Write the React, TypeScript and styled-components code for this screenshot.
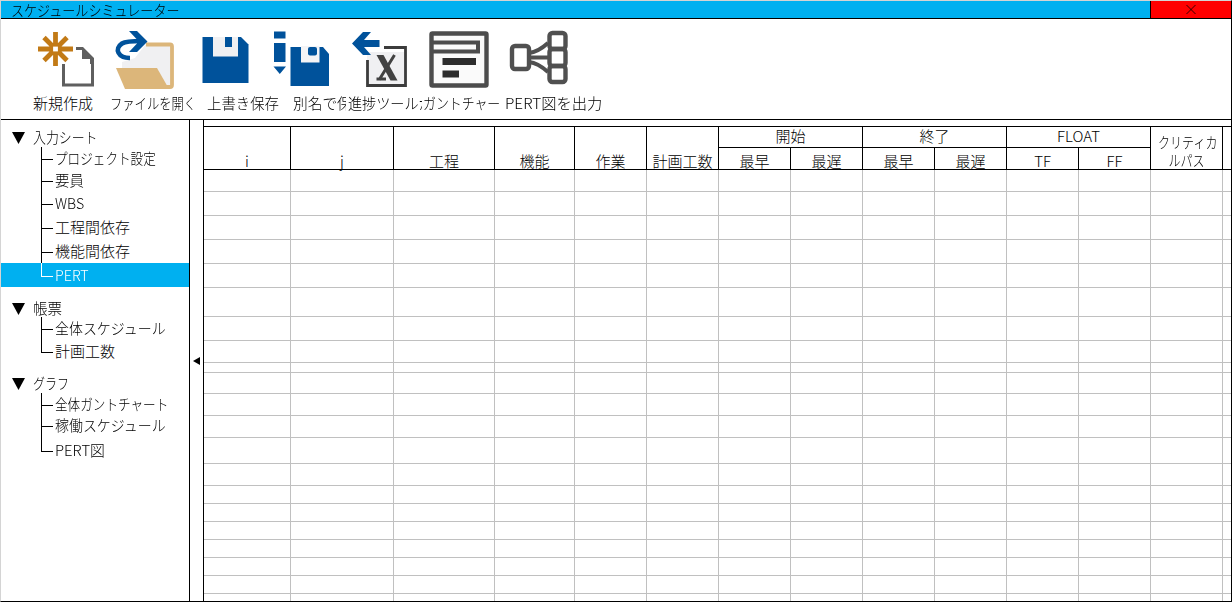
import React from "react";
import styled, { createGlobalStyle } from "styled-components";

const Global = createGlobalStyle`
  * { box-sizing: border-box; }
  body { margin: 0; background: #fff; color: #000; overflow: hidden;
    font: 300 15px/18px "Noto Sans CJK JP", sans-serif; }
`;

const Window = styled.div`
  width: 1232px; height: 602px; display: flex; flex-direction: column;
  border: solid; border-width: 1px; border-color: #d4d4d4 #000 #000 #d4d4d4;
`;
const TitleBar = styled.header`
  flex: 0 0 18px; height: 18px; display: flex; background: #00b0f0; border-bottom: 1px solid #000;
  padding-left: 10px; line-height: 17px;
`;
const CloseButton = styled.div`
  margin-left: auto; width: 81px; background: #f00; border-left: 1px solid #000;
  display: flex; justify-content: center; align-items: center;
`;
/* Text squeezed horizontally to a fixed run width, like a proportional gothic. */
const Fit = styled.span<{ $s?: number }>`
  display: inline-block; white-space: nowrap; transform-origin: 0 50%;
  transform: scaleX(${(p) => p.$s ?? 1});
`;
const Toolbar = styled.nav`
  flex: 0 0 101px; display: flex; border-bottom: 1px solid #000; padding-left: 32px;
`;
const Tool = styled.div<{ $w: number; $icon: number; $soft?: boolean }>`
  flex: 0 0 ${(p) => p.$w}px; min-width: 0; padding-top: 9px;
  svg { display: block; width: 68px; height: 64px; margin-left: ${(p) => p.$icon}px;
    filter: ${(p) => (p.$soft ? "blur(0.7px)" : "none")}; }
`;
const ToolLabel = styled.div<{ $clip: number }>`
  height: 22px; margin: 2px ${(p) => p.$clip}px 0 0; overflow: hidden; white-space: nowrap;
`;

const Body = styled.div`flex: 1; display: flex; min-height: 0;`;
const Sidebar = styled.aside`
  width: 189px; border-right: 1px solid #000; padding-top: 9px;
`;
const Group = styled.section<{ $gap: number }>`margin-bottom: ${(p) => p.$gap}px;`;
const GroupHead = styled.div<{ $h: number }>`
  display: flex; height: ${(p) => p.$h}px; padding-left: 11px; gap: 8px; line-height: 15px;
  svg { margin-top: 3px; }
`;
const Leaf = styled.div<{ $h: number; $active?: boolean }>`
  height: ${(p) => p.$h}px; display: flex; padding-left: 40px;
  background: ${(p) => (p.$active ? "#00b0f0" : "transparent")};
  color: ${(p) => (p.$active ? "#fff" : "#000")};
`;
const Branch = styled.span<{ $mid: number; $last?: boolean }>`
  flex: 0 0 12px; margin-right: 2px; display: flex; flex-direction: column;
  &::before { content: ""; height: ${(p) => p.$mid}px; border: solid currentColor; border-width: 0 0 1px 1px; }
  &::after { content: ""; flex: 1; border-left: ${(p) => (p.$last ? 0 : 1)}px solid currentColor; }
`;
const LeafText = styled.span<{ $mid: number }>`margin-top: ${(p) => p.$mid - 10}px;`;
const Splitter = styled.div`
  width: 14px; border-right: 1px solid #000; padding: 237px 0 0 3px;
  svg { display: block; }
`;
const Sheet = styled.main`flex: 1; min-width: 0; padding-top: 6px; overflow: hidden;`;
const Table = styled.table`
  table-layout: fixed; border-collapse: separate; border-spacing: 0; width: 1027px;
  border-top: 1px solid #000;
`;
const Th = styled.th<{ $end?: boolean; $group?: boolean }>`
  padding: 0 0 ${(p) => (p.$group ? 3 : 0)}px; font-weight: 300; text-align: center; vertical-align: bottom;
  border: solid #000; border-width: 0 ${(p) => (p.$end ? 0 : 1)}px 1px 0;
  line-height: 17px; white-space: nowrap;
`;
const Crit = styled.div`line-height: 18px; transform: scaleX(0.8);`;
const Td = styled.td<{ $end?: boolean }>`
  padding: 0; border: solid #c0c0c0; border-width: 0 ${(p) => (p.$end ? 0 : 1)}px 1px 0;
`;
const Row = styled.tr<{ $h: number }>`height: ${(p) => p.$h}px;`;

const BLUE = "#00529b";

const NewIcon = () => (
  <svg viewBox="0 0 68 64">
    <path d="M34.500 36V57H63.500V31" fill="none" stroke="#5f5f5f" strokeWidth="3" />
    <path d="M47 19H54L65 30V36H61V31H53V22H47Z" fill="#5f5f5f" />
    <path d="M26.500 4V16M26.500 26V38M9 21H21M32 21H44M15 9.500L23 17.500M38 9.500L30 17.500M15 32.500L23 24.500M38 32.500L30 24.500" stroke="#c27a16" strokeWidth="4.800" />
    <rect x="22.500" y="17" width="8" height="8" fill="none" stroke="#c27a16" strokeWidth="3.200" />
  </svg>
);
const OpenIcon = () => (
  <svg viewBox="0 0 68 64">
    <path d="M33 16H58V59H52L42 40H9V34L22 30Z" fill="#f0f0f2" />
    <path d="M33 16.500H57Q59 16.500 59 18.500V57Q59 59 57 59H53" fill="none" stroke="#dcb67a" strokeWidth="3.800" />
    <path d="M3 40H44L56 61H12Z" fill="#dcb67a" />
    <path d="M17 30C5 30 1 21 9 15.500Q13 13 29 13" fill="none" stroke={BLUE} strokeWidth="4.600" />
    <path d="M16 3H24L34.500 13.500L24 24H16L24 15.500V11.500Z" fill={BLUE} />
  </svg>
);
const SaveIcon = () => (
  <svg viewBox="0 0 68 64">
    <path d="M9.500 9H48L55.500 16.500V55H9.500Z" fill={BLUE} />
    <path d="M20 9H45V28.500H20Z" fill="#f0f0f2" />
    <path d="M32 9H39V19H32Z" fill={BLUE} />
  </svg>
);
const SaveAsIcon = () => (
  <svg viewBox="0 0 68 64">
    <path d="M4 3.500H15.500V10.500H4ZM4 15H15.500V34H4ZM3.500 38.500H16L9.800 46Z" fill={BLUE} />
    <path d="M20.500 19H53L59 26V58H20.500Z" fill={BLUE} />
    <path d="M31 18H49.500V34.500H31Z" fill="#f4f4f6" />
    <rect x="38" y="19" width="9" height="8.500" rx="2" fill={BLUE} />
  </svg>
);
const ExportIcon = () => (
  <svg viewBox="0 0 68 64">
    <path d="M19 24H56V58H19Z" fill="#f0f0f2" />
    <path d="M36 19.500H57.500V57.500H19.500V32" fill="none" stroke="#3c3c3c" strokeWidth="2.800" />
    <path d="M4 15.500L15 4H23L16 12H31.500V19H16L23 27H15Z" fill={BLUE} />
    <path d="M28.500 27H35.500L49.500 52.500H42.500Z" fill="#424242" />
    <path d="M46.500 27L31 52M28.500 51H38" fill="none" stroke="#424242" strokeWidth="3" />
  </svg>
);
const GanttIcon = () => (
  <svg viewBox="0 0 68 64" fill="none" stroke="#4c4c4c">
    <rect x="7.500" y="5.500" width="55" height="52" rx="1" strokeWidth="4.400" fill="#fafafa" />
    <path d="M9 14.500H54V23.500H9" strokeWidth="4" />
    <path d="M18.500 33.500H52M18.500 46H35" stroke="#2c2c2c" strokeWidth="7" />
  </svg>
);
const PertIcon = () => (
  <svg viewBox="0 0 68 64" fill="none" stroke="#505050" strokeWidth="4.400">
    <rect x="6" y="18" width="17" height="23" rx="3" />
    <rect x="43.500" y="5" width="16" height="16" rx="3" />
    <rect x="43.500" y="21" width="16" height="17" rx="3" />
    <rect x="43.500" y="38" width="16" height="16" rx="3" />
    <path d="M23 25Q32 24 42 15M23 29.500H43M23 34Q32 35 42 44" strokeWidth="4" />
  </svg>
);

const tools = [
  { w: 77, icon: -4, s: 1, clip: 0, t: "新規作成", I: NewIcon },
  { w: 97, icon: 3, s: 0.82, clip: 10, t: "ファイルを開く", I: OpenIcon },
  { w: 86, icon: -14, s: 0.96, clip: 0, t: "上書き保存", I: SaveIcon },
  { w: 55, icon: -23, s: 0.98, clip: 2, t: "別名で保存", I: SaveAsIcon, soft: true },
  { w: 75, icon: 0, s: 0.94, clip: 1, t: "進捗ツールから", I: ExportIcon },
  { w: 82, icon: 1, s: 0.86, clip: 0, t: "ガントチャー", I: GanttIcon, soft: true },
  { w: 110, icon: 1, s: 1.02, clip: 0, t: "PERT図を出力", I: PertIcon, soft: true },
];

type LeafT = [string, number, number, number];
const groups: { t: string; s: number; h: number; gap: number; items: LeafT[] }[] = [
  { t: "入力シート", s: 0.86, h: 18, gap: 13, items: [
    ["プロジェクト設定", 23, 12, 0.84], ["要員", 22, 11, 0.96], ["WBS", 23, 12, 0.94],
    ["工程間依存", 24, 13, 1], ["機能間依存", 24, 13, 1], ["PERT", 24, 13, 0.95]] },
  { t: "帳票", s: 0.97, h: 17, gap: 13, items: [["全体スケジュール", 23, 12, 0.93], ["計画工数", 22, 12, 1]] },
  { t: "グラフ", s: 0.8, h: 18, gap: 0, items: [["全体ガントチャート", 22, 12, 0.84], ["稼働スケジュール", 22, 11, 0.93], ["PERT図", 24, 14, 0.99]] },
];

const cols = [87, 103, 101, 80, 72, 72, 72, 72, 72, 72, 72, 72, 72, 8];
const rows = [22, 24, 24, 24, 24, 29, 24, 22, 10, 21, 22, 22, 26, 22, 18, 18, 18, 18, 18, 18, 8];

export default function App() {
  return (
    <Window>
      <Global />
      <TitleBar>
        <Fit $s={0.87}>スケジュールシミュレーター</Fit>
        <CloseButton>
          <svg width="10" height="9" viewBox="0 0 10 9"><path d="M.5 0L9.500 9M9.500 0L.5 9" stroke="#000" strokeWidth=".8" /></svg>
        </CloseButton>
      </TitleBar>
      <Toolbar>
        {tools.map(({ w, icon, s, clip, t, I, soft }) => (
          <Tool key={t} $w={w} $icon={icon} $soft={soft}><I /><ToolLabel $clip={clip}><Fit $s={s}>{t}</Fit></ToolLabel></Tool>
        ))}
      </Toolbar>
      <Body>
        <Sidebar>
          {groups.map((g) => (
            <Group key={g.t} $gap={g.gap}>
              <GroupHead $h={g.h}>
                <svg width="13" height="12"><path d="M0 0H13L6.500 12Z" /></svg>
                <Fit $s={g.s}>{g.t}</Fit>
              </GroupHead>
              {g.items.map(([t, h, mid, s], i) => (
                <Leaf key={t} $h={h} $active={t === "PERT"}>
                  <Branch $mid={mid} $last={i === g.items.length - 1} />
                  <LeafText $mid={mid}><Fit $s={s}>{t}</Fit></LeafText>
                </Leaf>
              ))}
            </Group>
          ))}
        </Sidebar>
        <Splitter><svg width="7" height="8"><path d="M0 4L7 0V8Z" /></svg></Splitter>
        <Sheet>
          <Table>
            <colgroup>{cols.map((w, i) => <col key={i} style={{ width: w }} />)}</colgroup>
            <thead>
              <Row $h={21}>
                {["i", "j", "工程", "機能", "作業", "計画工数"].map((t) => <Th key={t} rowSpan={2}>{t}</Th>)}
                {["開始", "終了", "FLOAT"].map((t) => <Th key={t} colSpan={2} $group>{t}</Th>)}
                <Th rowSpan={2}><Crit>クリティカ<br />ルパス</Crit></Th>
                <Th rowSpan={2} $end />
              </Row>
              <Row $h={22}>
                {["最早", "最遅", "最早", "最遅", "TF", "FF"].map((t, i) => <Th key={i}>{t}</Th>)}
              </Row>
            </thead>
            <tbody>
              {rows.map((h, r) => (
                <Row key={r} $h={h}>{cols.map((_, c) => <Td key={c} $end={c === 13} />)}</Row>
              ))}
            </tbody>
          </Table>
        </Sheet>
      </Body>
    </Window>
  );
}
